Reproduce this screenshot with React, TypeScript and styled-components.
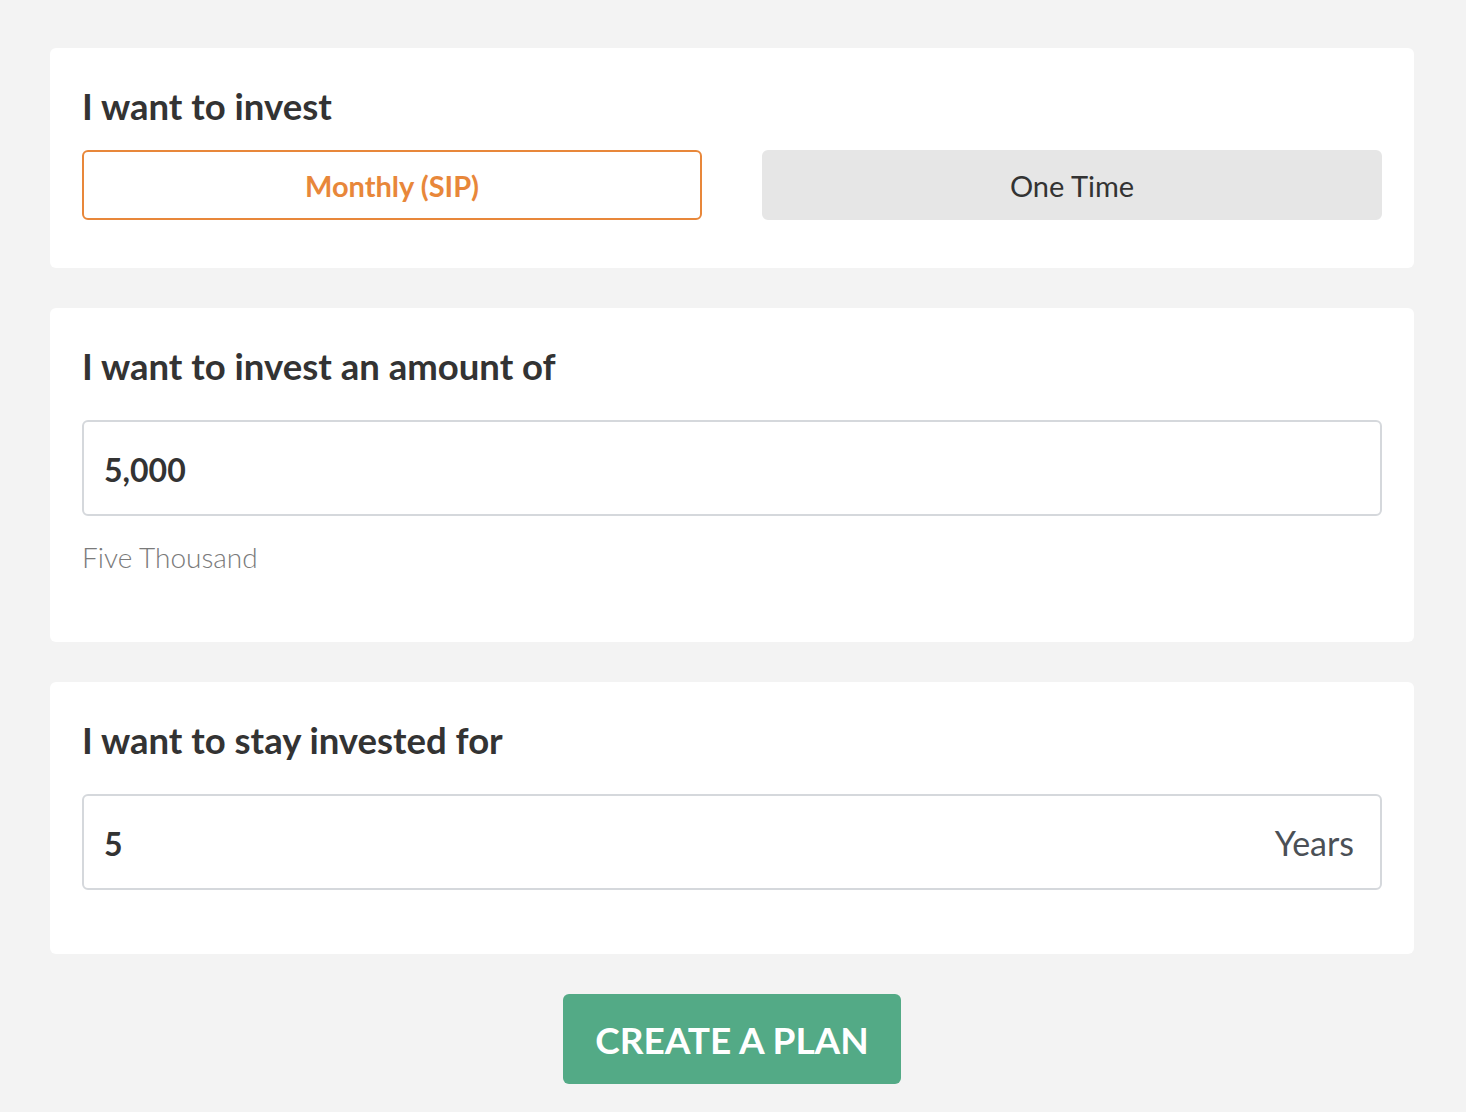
import { useState } from 'react';
import styled, { createGlobalStyle } from 'styled-components';

const GlobalStyle = createGlobalStyle`
  html, body {
    margin: 0;
    padding: 0;
    background: #f3f3f3;
    font-family: Lato, "Open Sans", sans-serif;
    color: #333;
  }
  * {
    box-sizing: border-box;
  }
`;

const Page = styled.div`
  display: flex;
  flex-direction: column;
  align-items: center;
  gap: 40px;
  padding: 48px 52px 28px 50px;
`;

const Card = styled.section<{ $bottom: number }>`
  width: 100%;
  background: #fff;
  border-radius: 6px;
  padding: 36px 32px ${({ $bottom }) => $bottom}px;
`;

const Title = styled.h2`
  margin: 0;
  font-size: 36.5px;
  font-weight: 700;
  line-height: 44px;
  color: #333;
`;

const ToggleRow = styled.div`
  display: grid;
  grid-template-columns: 1fr 1fr;
  gap: 60px;
  margin-top: 22px;
`;

const Toggle = styled.button<{ $active?: boolean }>`
  height: 70px;
  border-radius: 6px;
  font-family: inherit;
  font-size: 29px;
  cursor: pointer;
  border: 2px solid ${({ $active }) => ($active ? '#e8873a' : '#e6e6e6')};
  background: ${({ $active }) => ($active ? '#fff' : '#e6e6e6')};
  color: ${({ $active }) => ($active ? '#e8873a' : '#333')};
  font-weight: ${({ $active }) => ($active ? 700 : 400)};
`;

const InputBox = styled.div`
  display: flex;
  align-items: center;
  justify-content: space-between;
  height: 96px;
  margin-top: 32px;
  padding: 0 26px 0 20px;
  border: 2px solid #d5d8dc;
  border-radius: 6px;
`;

const Input = styled.input`
  flex: 1;
  border: none;
  outline: none;
  padding: 0;
  margin-top: 2px;
  background: transparent;
  font-family: inherit;
  font-size: 32px;
  font-weight: 700;
  color: #333;
`;

const Unit = styled.span`
  font-size: 34px;
  color: #4b5056;
`;

const Hint = styled.div`
  margin-top: 24px;
  font-size: 28px;
  font-weight: 300;
  color: #7a7a7a;
`;

const CreateButton = styled.button`
  width: 338px;
  height: 90px;
  border: none;
  border-radius: 6px;
  background: #53aa86;
  color: #fff;
  font-family: inherit;
  font-size: 37px;
  font-weight: 700;
  cursor: pointer;
`;

export default function App() {
  const [mode, setMode] = useState<'sip' | 'once'>('sip');
  const [amount, setAmount] = useState('5,000');
  const [years, setYears] = useState('5');

  return (
    <>
      <GlobalStyle />
      <Page>
        <Card $bottom={48}>
          <Title>I want to invest</Title>
          <ToggleRow>
            <Toggle $active={mode === 'sip'} onClick={() => setMode('sip')}>
              Monthly (SIP)
            </Toggle>
            <Toggle $active={mode === 'once'} onClick={() => setMode('once')}>
              One Time
            </Toggle>
          </ToggleRow>
        </Card>
        <Card $bottom={68}>
          <Title>I want to invest an amount of</Title>
          <InputBox>
            <Input value={amount} onChange={(e) => setAmount(e.target.value)} />
          </InputBox>
          <Hint>Five Thousand</Hint>
        </Card>
        <Card $bottom={64}>
          <Title>I want to stay invested for</Title>
          <InputBox>
            <Input value={years} onChange={(e) => setYears(e.target.value)} />
            <Unit>Years</Unit>
          </InputBox>
        </Card>
        <CreateButton>CREATE A PLAN</CreateButton>
      </Page>
    </>
  );
}
